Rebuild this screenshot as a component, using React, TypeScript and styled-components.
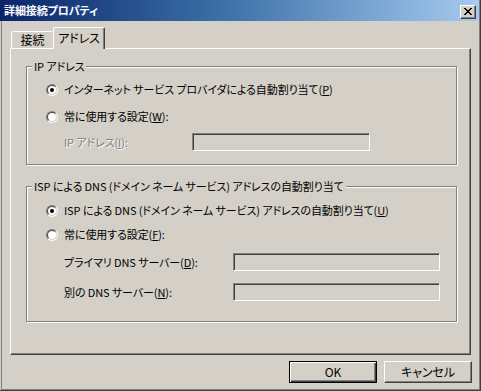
import React from 'react';
import styled, { createGlobalStyle } from 'styled-components';

const FONT = `"Noto Sans CJK JP", "Liberation Sans", sans-serif`;

const GlobalStyle = createGlobalStyle`
  html, body { margin: 0; padding: 0; background: #d4d0c8; }
  body { font-family: ${FONT}; font-size: 11px; color: #000; }
  * { box-sizing: border-box; }
`;

const Window = styled.div`
  width: 481px;
  height: 391px;
  background: #d4d0c8;
  display: flex;
  flex-direction: column;
  border-right: 1px solid #404040;
  border-bottom: 1px solid #404040;
  box-shadow: inset 1px 0 0 #d4d0c8, inset 2px 0 0 #808080, inset -1px -1px 0 #808080;
  font-family: ${FONT};
  font-size: 11px;
  letter-spacing: -0.1px;
  font-feature-settings: "palt";
`;

const TitleBar = styled.div`
  height: 21px;
  margin-right: 1px;
  display: flex;
  align-items: flex-start;
  background: linear-gradient(to right, #0a246a 0%, #3a6ea5 45%, #a6caf0 100%);
`;

const TitleText = styled.div`
  flex: 1;
  padding-left: 4px;
  line-height: 21px;
  color: #fff;
  font-weight: bold;
  font-size: 11px;
`;

const CloseButton = styled.div`
  width: 16px;
  height: 14px;
  margin: 5px 3px 0 0;
  background: #d4d0c8;
  border: 1px solid;
  border-color: #fff #404040 #404040 #fff;
  box-shadow: inset -1px -1px 0 #808080;
  display: flex;
  align-items: center;
  justify-content: center;
  padding: 0 1px 1px 0;
`;

const Content = styled.div`
  flex: 1;
  display: flex;
  flex-direction: column;
  padding: 0 9px 0 10px;
`;

const TabRow = styled.div`
  height: 27px;
  display: flex;
  align-items: flex-end;
  padding-left: 1px;
`;

const Tab = styled.div<{ $active?: boolean }>`
  position: relative;
  z-index: ${(p) => (p.$active ? 1 : 0)};
  width: ${(p) => (p.$active ? 52 : 42)}px;
  height: ${(p) => (p.$active ? 22 : 17)}px;
  margin-bottom: ${(p) => (p.$active ? -1 : 0)}px;
  background: #d4d0c8;
  border-top: 1px solid #fff;
  border-left: 1px solid #fff;
  border-right: ${(p) => (p.$active ? '1px solid #404040' : 'none')};
  box-shadow: ${(p) => (p.$active ? 'inset -1px 0 0 #808080' : 'none')};
  border-radius: 2px 2px 0 0;
  display: flex;
  align-items: center;
  justify-content: center;
  padding-bottom: ${(p) => (p.$active ? 1 : 0)}px;
  line-height: 14px;
  font-size: 12px;
`;

const Panel = styled.div`
  height: 307px;
  border-top: 1px solid #fff;
  border-left: 1px solid #fff;
  border-right: 1px solid #404040;
  border-bottom: 1px solid #404040;
  box-shadow: inset -1px -1px 0 #808080;
  padding: 17px 13px 0 15px;
  display: flex;
  flex-direction: column;
`;

const Group = styled.div<{ $height: number; $top: number }>`
  position: relative;
  height: ${(p) => p.$height}px;
  margin-top: ${(p) => p.$top}px;
  border: 1px solid #808080;
  box-shadow: inset 1px 1px 0 #fff, 1px 1px 0 #fff;
  display: flex;
  flex-direction: column;
  padding-left: 19px;
`;

const GroupTitle = styled.span`
  position: absolute;
  top: -8px;
  left: 5px;
  padding: 0 2px;
  line-height: 14px;
  background: #d4d0c8;
  white-space: nowrap;
`;

const RadioRow = styled.div<{ $gap: number }>`
  display: flex;
  align-items: center;
  height: 15px;
  margin-top: ${(p) => p.$gap}px;
  gap: 6px;
  white-space: nowrap;
  line-height: 15px;
`;

const RadioOuter = styled.span`
  width: 12px;
  height: 12px;
  flex: none;
  border-radius: 50%;
  border: 1px solid;
  border-color: #808080 #fff #fff #808080;
  display: flex;
  align-items: center;
  justify-content: center;
`;

const RadioInner = styled.span`
  width: 10px;
  height: 10px;
  border-radius: 50%;
  border: 1px solid;
  border-color: #404040 #d4d0c8 #d4d0c8 #404040;
  background: #fff;
  display: flex;
  align-items: center;
  justify-content: center;
`;

const RadioDot = styled.span`
  width: 4px;
  height: 4px;
  border-radius: 50%;
  background: #000;
`;

const FieldRow = styled.div<{ $gap: number; $label: number; $input: number }>`
  display: grid;
  grid-template-columns: ${(p) => p.$label}px ${(p) => p.$input}px;
  align-items: center;
  height: 18px;
  margin-top: ${(p) => p.$gap}px;
  padding-left: 18px;
  white-space: nowrap;
`;

const FieldLabel = styled.span<{ $disabled?: boolean }>`
  line-height: 15px;
  color: ${(p) => (p.$disabled ? '#808080' : '#000')};
  text-shadow: ${(p) => (p.$disabled ? '1px 1px 0 #fff' : 'none')};
`;

const TextBox = styled.div`
  height: 18px;
  background: #d4d0c8;
  border: 1px solid;
  border-color: #808080 #fff #fff #808080;
  box-shadow: inset 1px 1px 0 #404040, inset -1px -1px 0 #d4d0c8;
`;

const Key = styled.span`
  text-decoration: underline;
  text-underline-offset: 1px;
`;

const ButtonRow = styled.div`
  display: flex;
  justify-content: flex-end;
  gap: 7px;
  margin-top: 6px;
  margin-right: -1px;
`;

const Button = styled.div<{ $default?: boolean }>`
  width: 88px;
  height: 22px;
  display: flex;
  align-items: center;
  justify-content: center;
  line-height: 14px;
  font-size: 12px;
  border: 1px solid;
  border-color: ${(p) => (p.$default ? '#000' : '#fff #404040 #404040 #fff')};
  box-shadow: ${(p) =>
    p.$default
      ? 'inset 1px 1px 0 #fff, inset -1px -1px 0 #404040, inset -2px -2px 0 #808080'
      : 'inset -1px -1px 0 #808080'};
`;

const Radio = ({ checked }: { checked?: boolean }) => (
  <RadioOuter>
    <RadioInner>{checked && <RadioDot />}</RadioInner>
  </RadioOuter>
);

const CloseGlyph = () => (
  <svg width="8" height="7" viewBox="0 0 8 7" shapeRendering="crispEdges">
    <path
      fill="#000"
      d="M0 0h2v1H0zM6 0h2v1H6zM1 1h2v1H1zM5 1h2v1H5zM2 2h4v1H2zM3 3h2v1H3zM2 4h4v1H2zM1 5h2v1H1zM5 5h2v1H5zM0 6h2v1H0zM6 6h2v1H6z"
    />
  </svg>
);

export default function App() {
  return (
    <>
      <GlobalStyle />
      <Window>
        <TitleBar>
          <TitleText>詳細接続プロパティ</TitleText>
          <CloseButton>
            <CloseGlyph />
          </CloseButton>
        </TitleBar>
        <Content>
          <TabRow>
            <Tab>接続</Tab>
            <Tab $active>アドレス</Tab>
          </TabRow>
          <Panel>
            <Group $height={99} $top={0}>
              <GroupTitle>IP アドレス</GroupTitle>
              <RadioRow $gap={15}>
                <Radio checked />
                <span>
                  インターネット サービス プロバイダによる自動割り当て(<Key>P</Key>)
                </span>
              </RadioRow>
              <RadioRow $gap={12}>
                <Radio />
                <span>
                  常に使用する設定(<Key>W</Key>):
                </span>
              </RadioRow>
              <FieldRow $gap={9} $label={128} $input={178}>
                <FieldLabel $disabled>
                  IP アドレス(<Key>I</Key>):
                </FieldLabel>
                <TextBox />
              </FieldRow>
            </Group>
            <Group $height={136} $top={21}>
              <GroupTitle>ISP による DNS (ドメイン ネーム サービス) アドレスの自動割り当て</GroupTitle>
              <RadioRow $gap={16}>
                <Radio checked />
                <span>
                  ISP による DNS (ドメイン ネーム サービス) アドレスの自動割り当て(<Key>U</Key>)
                </span>
              </RadioRow>
              <RadioRow $gap={9}>
                <Radio />
                <span>
                  常に使用する設定(<Key>F</Key>):
                </span>
              </RadioRow>
              <FieldRow $gap={11} $label={169} $input={207}>
                <FieldLabel>
                  プライマリ DNS サーバー(<Key>D</Key>):
                </FieldLabel>
                <TextBox />
              </FieldRow>
              <FieldRow $gap={12} $label={169} $input={207}>
                <FieldLabel>
                  別の DNS サーバー(<Key>N</Key>):
                </FieldLabel>
                <TextBox />
              </FieldRow>
            </Group>
          </Panel>
          <ButtonRow>
            <Button $default>OK</Button>
            <Button>キャンセル</Button>
          </ButtonRow>
        </Content>
      </Window>
    </>
  );
}
